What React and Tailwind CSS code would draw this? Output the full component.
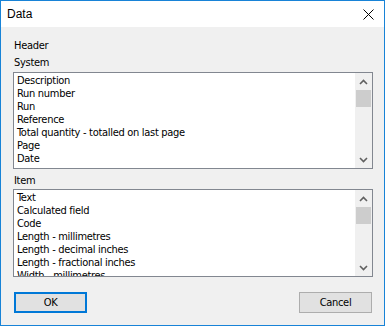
const systemItems = [
  'Description',
  'Run number',
  'Run',
  'Reference',
  'Total quantity - totalled on last page',
  'Page',
  'Date',
];

const itemItems = [
  'Text',
  'Calculated field',
  'Code',
  'Length - millimetres',
  'Length - decimal inches',
  'Length - fractional inches',
  'Width - millimetres',
];

const Chevron = ({ down }) => (
  <svg width="9" height="6" viewBox="0 0 9 6" className="block">
    <polyline
      points={down ? '1,1 4.5,4.5 8,1' : '1,5 4.5,1.5 8,5'}
      fill="none"
      stroke="#606060"
      strokeWidth="1.6"
    />
  </svg>
);

const ListBox = ({ items, height }) => (
  <div className={`flex border border-[#828790] bg-white ${height}`}>
    <div className="flex-1 overflow-hidden pl-[3px] pt-[1px]">
      {items.map((it) => (
        <div key={it} className="h-[13px] leading-[13px] whitespace-nowrap">{it}</div>
      ))}
    </div>
    <div className="w-[17px] flex flex-col bg-[#f0f0f0]">
      <div className="h-[17px] flex items-center justify-center">
        <Chevron />
      </div>
      <div className="mx-[1px] h-[17px] bg-[#cdcdcd]" />
      <div className="flex-1" />
      <div className="h-[17px] flex items-center justify-center">
        <Chevron down />
      </div>
    </div>
  </div>
);

export default function App() {
  return (
    <div className="w-[385px] h-[326px] border border-[#1883d7] flex flex-col text-black text-[11px] tracking-[-0.3px] font-['Liberation_Sans_Narrow','DejaVu_Sans_Condensed','Liberation_Sans',sans-serif]">
      <div className="h-[26px] bg-white flex items-center justify-between pl-[6px] pr-[10px]">
        <span className="text-[12px] leading-[26px] tracking-normal font-['Liberation_Sans',Arial,sans-serif]">Data</span>
        <svg width="11" height="11" viewBox="0 0 11 11">
          <path d="M0.5 0.5 L10.5 10.5 M10.5 0.5 L0.5 10.5" stroke="#000" strokeWidth="1" />
        </svg>
      </div>
      <div className="flex-1 bg-[#f0f0f0] pt-[12px] pl-[12px] pr-[11px]">
        <div className="h-[13px] leading-[13px] pl-[1px]">Header</div>
        <div className="mt-[4px] h-[13px] leading-[13px] pl-[1px]">System</div>
        <div className="mt-[3px]">
          <ListBox items={systemItems} height="h-[97px]" />
        </div>
        <div className="mt-[5px] h-[13px] leading-[13px] pl-[1px]">Item</div>
        <div className="mt-[2px]">
          <ListBox items={itemItems} height="h-[88px]" />
        </div>
        <div className="mt-[15px] flex justify-between pl-[1px] pr-[1px]">
          <button className="w-[73px] h-[21px] border-2 border-[#0078d7] bg-[#e1e1e1] leading-[17px]">OK</button>
          <button className="w-[73px] h-[21px] border border-[#adadad] bg-[#e1e1e1] leading-[19px]">Cancel</button>
        </div>
      </div>
    </div>
  );
}
